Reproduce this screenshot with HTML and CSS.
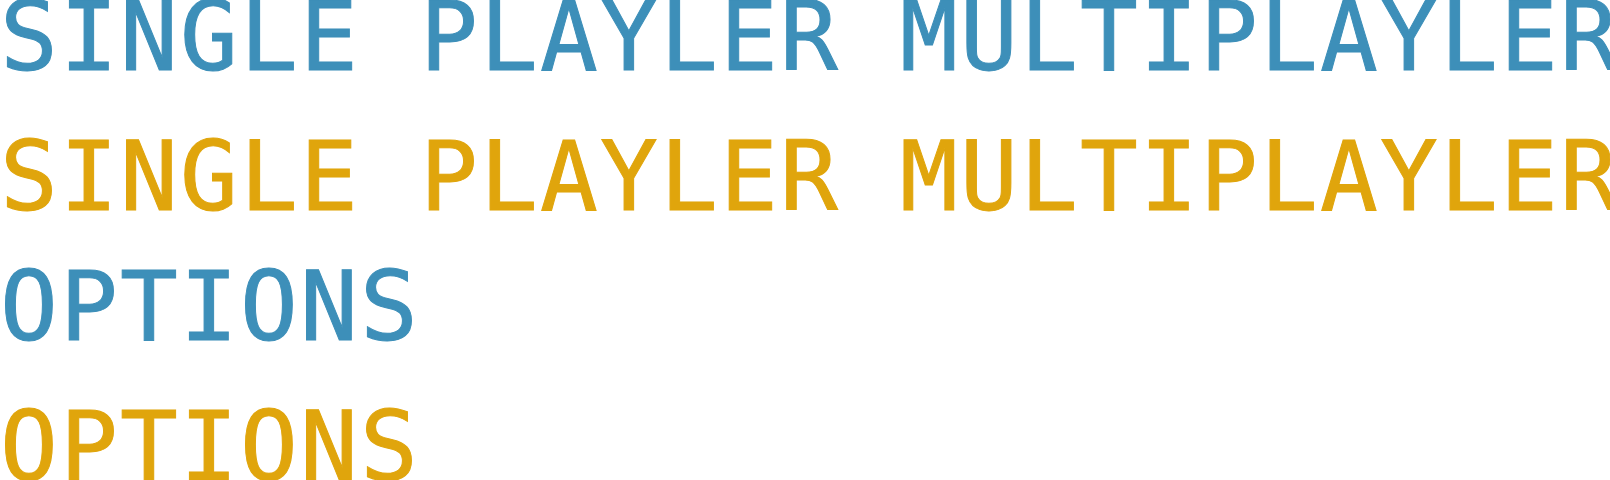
FILE: index.html
```html
<!DOCTYPE html>
<html lang="en">
<head>
  <meta charset="UTF-8">
  <meta name="viewport" content="width=device-width, initial-scale=1.0">
  <title>Menu Labels</title>
  <link rel="stylesheet" href="styles.css">
</head>
<body>

<div class="menu">
  <div class="menu-group">
    <div class="label label-idle">SINGLE PLAYLER MULTIPLAYLER</div>
    <div class="label label-hover">SINGLE PLAYLER MULTIPLAYLER</div>
  </div>

  <div class="menu-group">
    <div class="label label-idle">OPTIONS</div>
    <div class="label label-hover">OPTIONS</div>
  </div>
</div>

</body>
</html>
```

FILE: styles.css
```css
html, body {
  margin: 0;
  background: #ffffff;
  overflow: hidden;
}

.menu {
  display: flex;
  flex-direction: column;
  gap: 60px;
  padding-top: 2px;
}

.menu-group {
  display: flex;
  flex-direction: column;
  gap: 70px;
}

/* one 60px cell per character, caps 70px tall */
.label {
  height: 70px;
  font-family: "DejaVu Sans Mono", monospace;
  font-size: 96px;
  line-height: 70px;
  letter-spacing: 2.2px;
  white-space: nowrap;
  -webkit-text-stroke: 1px currentColor;
}

.label-idle {
  color: #3d8fb9;
}

.label-hover {
  color: #e0a50c;
}
```
